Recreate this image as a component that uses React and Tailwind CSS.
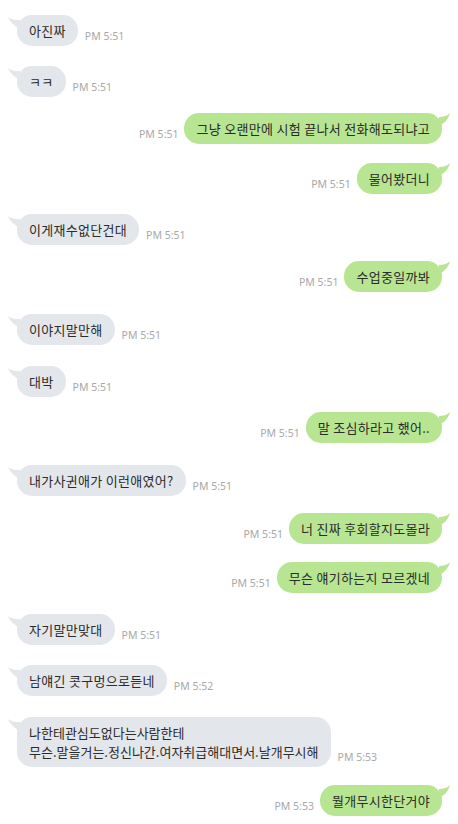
import React from 'react'

const messages = [
  { me: false, text: '아진짜', time: 'PM 5:51', mt: 15 },
  { me: false, text: 'ㅋㅋ', time: 'PM 5:51', mt: 20 },
  { me: true, text: '그냥 오랜만에 시험 끝나서 전화해도되냐고', time: 'PM 5:51', mt: 16 },
  { me: true, text: '물어봤더니', time: 'PM 5:51', mt: 19 },
  { me: false, text: '이게재수없단건대', time: 'PM 5:51', mt: 20 },
  { me: true, text: '수업중일까봐', time: 'PM 5:51', mt: 16 },
  { me: false, text: '이야지말만해', time: 'PM 5:51', mt: 22 },
  { me: false, text: '대박', time: 'PM 5:51', mt: 21 },
  { me: true, text: '말 조심하라고 했어..', time: 'PM 5:51', mt: 15 },
  { me: false, text: '내가사귄애가 이런애였어?', time: 'PM 5:51', mt: 22 },
  { me: true, text: '너 진짜 후회할지도몰라', time: 'PM 5:51', mt: 17 },
  { me: true, text: '무슨 얘기하는지 모르겠네', time: 'PM 5:51', mt: 18 },
  { me: false, text: '자기말만맞대', time: 'PM 5:51', mt: 21 },
  { me: false, text: '남얘긴 콧구멍으로듣네', time: 'PM 5:52', mt: 20 },
  {
    me: false,
    text: '나한테관심도없다는사람한테\n무슨.말을거는.정신나간.여자취급해대면서.날개무시해',
    time: 'PM 5:53',
    mt: 21,
    tight: true,
  },
  { me: true, text: '뭘개무시한단거야', time: 'PM 5:53', mt: 18 },
]

function Tail({ me }) {
  if (me) {
    return (
      <svg className="absolute -right-[9px] top-0" width="12" height="14" viewBox="0 0 12 14">
        <path d="M0 4 C4 4 8 3 11 0 C10 5 6 10 0 13 Z" fill="#b8e591" />
      </svg>
    )
  }
  return (
    <svg className="absolute -left-[9px] top-[1px]" width="12" height="14" viewBox="0 0 12 14">
      <path d="M12 4 C8 4 4 4 0 1 C2 6 6 10 12 13 Z" fill="#e3e6ea" />
    </svg>
  )
}

function Message({ me, text, time, mt, tight }) {
  const bubble = (
    <div
      className={
        'relative rounded-[15px] px-[12px] py-[6px] text-[13px] leading-[19px] text-[#2b2b2b] whitespace-pre-line ' +
        (tight ? 'tracking-[0px] ' : 'tracking-[0.3px] ') +
        (me ? 'bg-[#b8e591]' : 'bg-[#e3e6ea]')
      }
    >
      <Tail me={me} />
      {text}
    </div>
  )
  const stamp = (
    <span className="mb-[3px] text-[10.5px] leading-[14px] text-[#a8a8a8] font-['Noto_Sans',sans-serif]">
      {time}
    </span>
  )
  return (
    <div
      className={'flex items-end ' + (me ? 'justify-end gap-[6px]' : 'justify-start gap-[7px]')}
      style={{ marginTop: mt }}
    >
      {me ? (
        <>
          {stamp}
          {bubble}
        </>
      ) : (
        <>
          {bubble}
          {stamp}
        </>
      )}
    </div>
  )
}

export default function App() {
  return (
    <main className="w-[458px] h-[824px] overflow-hidden bg-white pl-[17px] pr-[16px] font-['Noto_Sans_CJK_KR','Noto_Sans',sans-serif]">
      {messages.map((m, i) => (
        <Message key={i} {...m} />
      ))}
    </main>
  )
}
